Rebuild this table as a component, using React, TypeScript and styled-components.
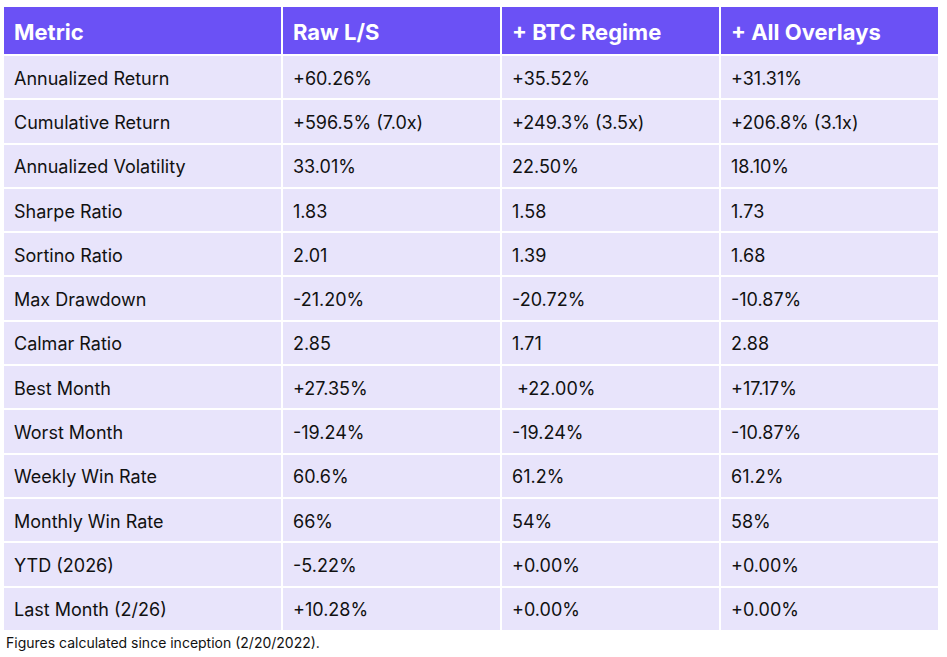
import React from "react";
import styled, { createGlobalStyle } from "styled-components";

const Global = createGlobalStyle`
  html, body { margin: 0; padding: 0; background: #ffffff; }
  body { font-family: Inter, "Noto Sans", sans-serif; color: #111111; }
`;

const Page = styled.div`
  padding: 5px 2px 0 2px;
`;

const Table = styled.table`
  border-collapse: separate;
  border-spacing: 2px;
  width: 938px;
  table-layout: fixed;
`;

const Col = styled.col<{ $w: number }>`
  width: ${(p) => p.$w}px;
`;

const HeadCell = styled.th`
  background: #6b51f5;
  color: #ffffff;
  font-weight: 700;
  font-size: 22px;
  text-align: left;
  padding: 2px 10px 0 10px;
  height: 47px;
  box-sizing: border-box;
`;

const Row = styled.tr`
  height: 42.3px;
`;

const Cell = styled.td`
  background: #e8e4fb;
  font-size: 18px;
  padding: 2px 10px 0 10px;
  color: #111111;
  white-space: nowrap;
`;

const Note = styled.div`
  font-size: 14px;
  padding: 2px 0 0 4px;
  color: #111111;
`;

const rows: [string, string, string, string][] = [
  ["Annualized Return", "+60.26%", "+35.52%", "+31.31%"],
  ["Cumulative Return", "+596.5% (7.0x)", "+249.3% (3.5x)", "+206.8% (3.1x)"],
  ["Annualized Volatility", "33.01%", "22.50%", "18.10%"],
  ["Sharpe Ratio", "1.83", "1.58", "1.73"],
  ["Sortino Ratio", "2.01", "1.39", "1.68"],
  ["Max Drawdown", "-21.20%", "-20.72%", "-10.87%"],
  ["Calmar Ratio", "2.85", "1.71", "2.88"],
  ["Best Month", "+27.35%", "\u00a0+22.00%", "+17.17%"],
  ["Worst Month", "-19.24%", "-19.24%", "-10.87%"],
  ["Weekly Win Rate", "60.6%", "61.2%", "61.2%"],
  ["Monthly Win Rate", "66%", "54%", "58%"],
  ["YTD (2026)", "-5.22%", "+0.00%", "+0.00%"],
  ["Last Month (2/26)", "+10.28%", "+0.00%", "+0.00%"],
];

export default function App() {
  return (
    <Page>
      <Global />
      <Table>
        <colgroup>
          <Col $w={277} />
          <Col $w={217} />
          <Col $w={217} />
          <Col $w={217} />
        </colgroup>
        <thead>
          <tr>
            <HeadCell>Metric</HeadCell>
            <HeadCell>Raw L/S</HeadCell>
            <HeadCell>+ BTC Regime</HeadCell>
            <HeadCell>+ All Overlays</HeadCell>
          </tr>
        </thead>
        <tbody>
          {rows.map((r) => (
            <Row key={r[0]}>
              {r.map((c, i) => (
                <Cell key={i}>{c}</Cell>
              ))}
            </Row>
          ))}
        </tbody>
      </Table>
      <Note>Figures calculated since inception (2/20/2022).</Note>
    </Page>
  );
}
